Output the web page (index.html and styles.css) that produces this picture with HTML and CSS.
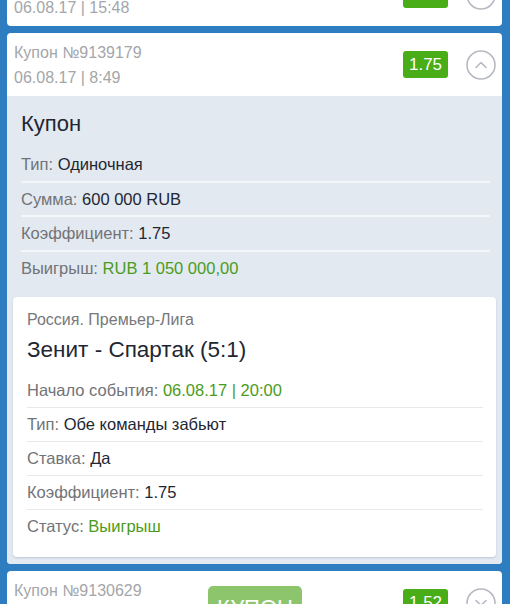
FILE: index.html
```html
<!DOCTYPE html>
<html lang="ru">
<head>
<meta charset="utf-8">
<link rel="stylesheet" href="styles.css">
</head>
<body>
<div class="list">
  <div class="card card-first">
    <div class="head">
      <div class="head-info">
        <div class="head-line">Купон №9139221</div>
        <div class="head-line">06.08.17 | 15:48</div>
      </div>
      <div class="badge">1.75</div>
      <div class="toggle">
        <svg width="30" height="30" viewBox="0 0 30 30"><circle cx="15" cy="15" r="14" fill="none" stroke="#b6b9c2" stroke-width="1.6"/><path d="M10 17.5 L15 12.5 L20 17.5" fill="none" stroke="#b6b9c2" stroke-width="1.6" stroke-linecap="round" stroke-linejoin="round"/></svg>
      </div>
    </div>
  </div>

  <div class="card">
    <div class="head">
      <div class="head-info">
        <div class="head-line">Купон №9139179</div>
        <div class="head-line">06.08.17 | 8:49</div>
      </div>
      <div class="badge">1.75</div>
      <div class="toggle">
        <svg width="30" height="30" viewBox="0 0 30 30"><circle cx="15" cy="15" r="14" fill="none" stroke="#b6b9c2" stroke-width="1.6"/><path d="M10 17.5 L15 12.5 L20 17.5" fill="none" stroke="#b6b9c2" stroke-width="1.6" stroke-linecap="round" stroke-linejoin="round"/></svg>
      </div>
    </div>
    <div class="details">
      <div class="summary">
        <div class="summary-title">Купон</div>
        <div class="srow"><span class="lbl">Тип:</span> <span class="val">Одиночная</span></div>
        <div class="srow"><span class="lbl">Сумма:</span> <span class="val">600 000 RUB</span></div>
        <div class="srow"><span class="lbl">Коэффициент:</span> <span class="val">1.75</span></div>
        <div class="srow"><span class="lbl">Выигрыш:</span> <span class="val green">RUB 1 050 000,00</span></div>
      </div>
      <div class="event">
        <div class="league">Россия. Премьер-Лига</div>
        <div class="match">Зенит - Спартак (5:1)</div>
        <div class="erow"><span class="lbl">Начало события:</span> <span class="val green">06.08.17 | 20:00</span></div>
        <div class="erow"><span class="lbl">Тип:</span> <span class="val">Обе команды забьют</span></div>
        <div class="erow"><span class="lbl">Ставка:</span> <span class="val">Да</span></div>
        <div class="erow"><span class="lbl">Коэффициент:</span> <span class="val">1.75</span></div>
        <div class="erow"><span class="lbl">Статус:</span> <span class="val green">Выигрыш</span></div>
      </div>
    </div>
  </div>

  <div class="card card-last">
    <div class="head">
      <div class="head-info">
        <div class="head-line">Купон №9130629</div>
        <div class="head-line">06.08.17 | 8:12</div>
      </div>
      <div class="badge">1.52</div>
      <div class="toggle">
        <svg width="30" height="30" viewBox="0 0 30 30"><circle cx="15" cy="15" r="14" fill="none" stroke="#b6b9c2" stroke-width="1.6"/><path d="M10 12.5 L15 17.5 L20 12.5" fill="none" stroke="#b6b9c2" stroke-width="1.6" stroke-linecap="round" stroke-linejoin="round"/></svg>
      </div>
    </div>
  </div>
</div>
<div class="fab">КУПОН</div>
</body>
</html>
```

FILE: styles.css
```css
html, body {
  margin: 0;
  padding: 0;
}
body {
  background: #2d7dc0;
  font-family: "Liberation Sans", Arial, sans-serif;
  overflow: hidden;
  height: 604px;
  position: relative;
}
.list {
  display: flex;
  flex-direction: column;
  gap: 7px;
  padding: 0 8px 0 7px;
}
.card {
  background: #ffffff;
  border-radius: 4px;
  overflow: hidden;
}
.card-first {
  margin-top: -37px;
}
.card-last {
  min-height: 120px;
}
.head {
  height: 63px;
  display: flex;
  align-items: center;
  padding: 0 6px 0 7px;
  box-sizing: border-box;
}
.head-info {
  flex: 1;
}
.head-line {
  font-size: 16px;
  line-height: 25px;
  color: #a4a6a9;
}
.badge {
  width: 45px;
  height: 27px;
  line-height: 27px;
  text-align: center;
  background: #48ad17;
  color: #fff;
  font-size: 17px;
  border-radius: 3px;
  margin-right: 18px;
}
.toggle {
  width: 30px;
  height: 30px;
}
.toggle svg {
  display: block;
}
.details {
  background: #e3e9f1;
  padding: 14px 6px 7px 6px;
}
.summary {
  padding: 0 6px 0 8px;
}
.summary-title {
  font-size: 22px;
  line-height: 28px;
  color: #1e2732;
  margin-bottom: 10px;
}
.srow {
  font-size: 16.5px;
  line-height: 32.5px;
  border-bottom: 2px solid #f3f6f9;
}
.srow:last-child {
  border-bottom: none;
}
.lbl {
  color: #717377;
}
.val {
  color: #1e2732;
}
.green {
  color: #4a9c20;
}
.event {
  margin-top: 13px;
  background: #fff;
  border-radius: 4px;
  box-shadow: 0 1px 2px rgba(80, 100, 130, 0.25);
  padding: 13px 13px 14px 14px;
}
.league {
  font-size: 16px;
  line-height: 20px;
  color: #76787c;
}
.match {
  font-size: 22.5px;
  line-height: 28px;
  color: #1e2732;
  margin-top: 6px;
  margin-bottom: 10px;
}
.erow {
  font-size: 16.5px;
  line-height: 33px;
  border-bottom: 1px solid #e8e9eb;
}
.erow:last-child {
  border-bottom: none;
}
.fab {
  position: absolute;
  left: 208px;
  top: 586px;
  width: 94px;
  height: 44px;
  line-height: 44px;
  text-align: center;
  background: #8dc56c;
  color: #fff;
  font-size: 22px;
  border-radius: 5px;
}
```
